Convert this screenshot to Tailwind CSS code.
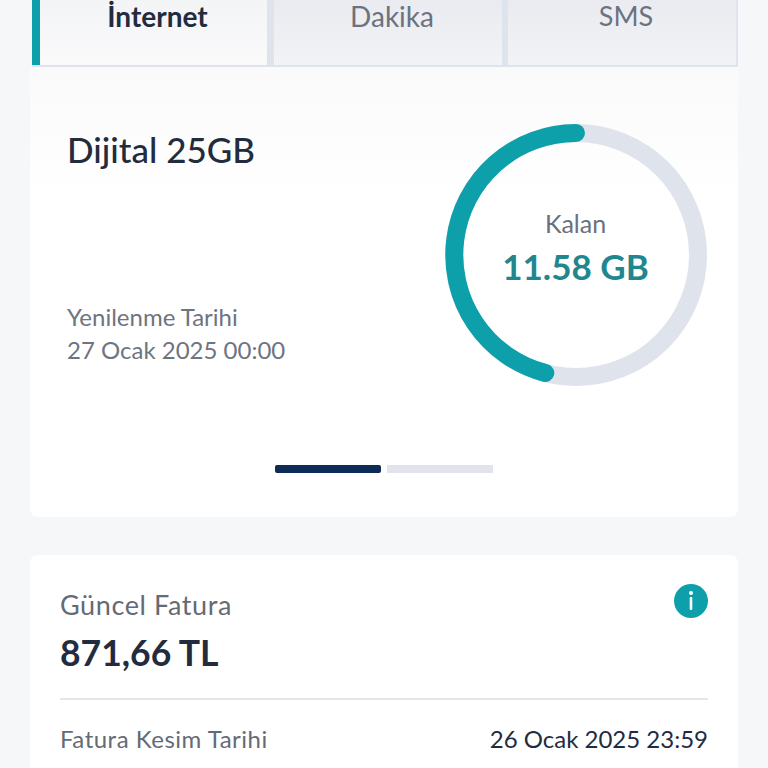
<!DOCTYPE html>
<html lang="tr">
<head>
  <meta charset="UTF-8">
  <meta name="viewport" content="width=device-width, initial-scale=1.0">
  <title>Kullanim</title>
  <script src="https://cdn.jsdelivr.net/npm/@tailwindcss/browser@4"></script>
</head>
<body class="bg-[#f5f7f9] font-['Lato','Noto_Sans',sans-serif] h-[768px] w-[768px] overflow-hidden">

  <div class="pl-[30px] pr-[30px]">

    <!-- Tabs -->
    <div class="flex h-[67px] ml-[2px] border-b-2 border-[#dfe3ec] bg-[#dfe3ec]">
      <div class="w-[235px] border-l-[8px] border-[#0da0ab] bg-linear-to-b/srgb from-[#f3f4f6] to-[#fafafb] pl-[8px] text-center text-[28px] leading-[32px] font-bold text-[#232b3e]">İnternet</div>
      <div class="ml-[7px] w-[228px] bg-linear-to-b/srgb from-[#e9ebf0] to-[#f2f3f6] pl-[8px] text-center text-[28px] leading-[32px] text-[#6d7280]">Dakika</div>
      <div class="ml-[6px] w-[229px] border-r border-[#dfe3ec] bg-linear-to-b/srgb from-[#e9ebf0] to-[#f2f3f6] pl-[8px] text-center text-[27px] leading-[32px] text-[#6d7280]">SMS</div>
    </div>

    <!-- Usage card -->
    <div class="h-[450px] rounded-b-lg bg-linear-to-b/srgb from-[#fafafa] to-white to-[30%] pl-[37px]">
      <div class="flex">
        <div class="w-[377.5px] pt-[62px]">
          <h2 class="text-[35px] leading-[40px] font-medium text-[#232b3e]">Dijital 25GB</h2>
          <p class="mt-[131px] text-[24px] leading-[33px] text-[#6e7480]">Yenilenme Tarihi<br>27 Ocak 2025 00:00</p>
        </div>
        <div class="relative mt-[57px] h-[262px] w-[262px]">
          <svg viewBox="0 0 262 262" class="h-[262px] w-[262px]" fill="none">
            <circle cx="131" cy="131" r="122" stroke="#dfe3ec" stroke-width="18"/>
            <path d="M131 9 A122 122 0 0 0 100.3 249" stroke="#0da0ab" stroke-width="18" stroke-linecap="round"/>
          </svg>
          <div class="absolute inset-0 flex flex-col items-center pt-[83px]">
            <span class="text-[25px] leading-[32px] text-[#6b7080]">Kalan</span>
            <span class="mt-[7px] text-[35px] leading-[40px] font-bold text-[#20878f]">11.58 GB</span>
          </div>
        </div>
      </div>
      <div class="mt-[79px] ml-[208px] flex gap-[6px]">
        <div class="h-[8px] w-[106px] rounded-[2px] bg-[#0c2b57]"></div>
        <div class="h-[8px] w-[106px] bg-[#e1e4ec]"></div>
      </div>
    </div>

    <!-- Invoice card -->
    <div class="mt-[38px] rounded-t-lg bg-white px-[30px] pt-[32px] pb-[30px]">
      <div class="flex justify-between">
        <div>
          <p class="text-[27px] leading-[36px] tracking-[0.6px] text-[#646b75]">Güncel Fatura</p>
          <p class="mt-[10px] text-[35.5px] leading-[40px] font-bold text-[#232b3e]">871,66 TL</p>
        </div>
        <svg viewBox="0 0 34 34" class="h-[34px] w-[34px] -mt-[3px]">
          <circle cx="17" cy="17" r="17" fill="#0da0ab"/>
          <circle cx="17" cy="9" r="2" fill="#fff"/>
          <rect x="15.7" y="13" width="2.6" height="13" rx="1" fill="#fff"/>
        </svg>
      </div>
      <div class="mt-[25px] flex justify-between border-t-2 border-[#e4e6e8] pt-[23px] leading-[32px]">
        <span class="text-[24px] tracking-[0.5px] text-[#646b75]">Fatura Kesim Tarihi</span>
        <span class="text-[24px] text-[#232b3e]">26 Ocak 2025 23:59</span>
      </div>
    </div>
  </div>

</body>
</html>
